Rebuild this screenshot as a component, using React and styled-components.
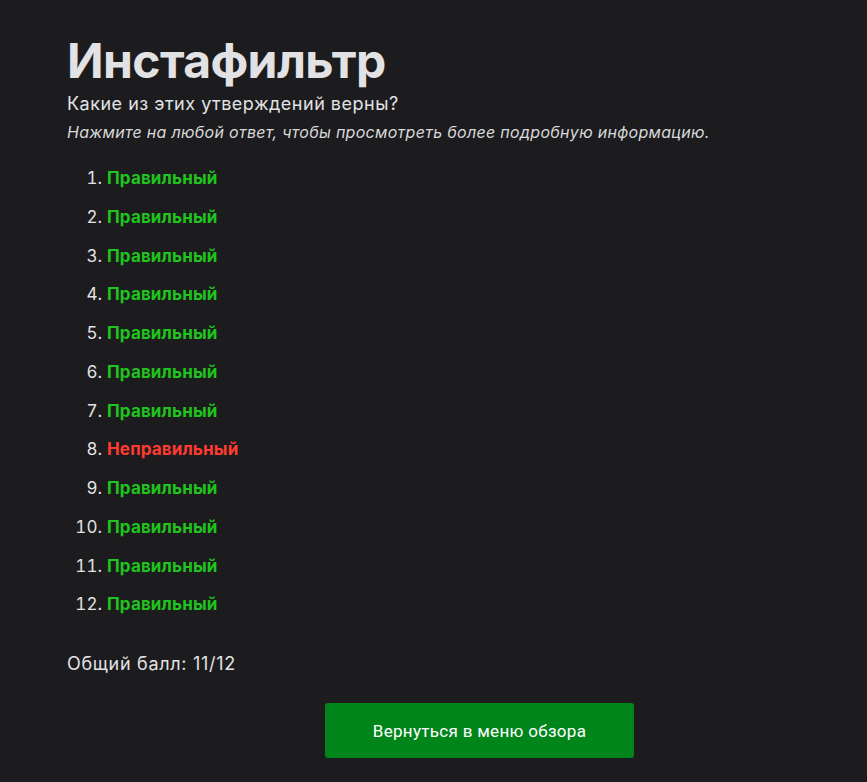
import React from "react";
import styled, { createGlobalStyle } from "styled-components";

const GlobalStyle = createGlobalStyle`
  html, body {
    margin: 0;
    background: #1c1c1e;
  }
  body {
    font-family: Inter, "Noto Sans", sans-serif;
    color: #e2e2e4;
  }
`;

const results = [true, true, true, true, true, true, true, false, true, true, true, true];

export default function App() {
  const score = results.filter(Boolean).length;
  return (
    <>
      <GlobalStyle />
      <Page>
        <Title>Инстафильтр</Title>
        <Question>Какие из этих утверждений верны?</Question>
        <Hint>Нажмите на любой ответ, чтобы просмотреть более подробную информацию.</Hint>
        <AnswerList>
          {results.map((ok, idx) => (
            <Answer key={idx}>
              <Verdict $ok={ok}>{ok ? "Правильный" : "Неправильный"}</Verdict>
            </Answer>
          ))}
        </AnswerList>
        <Score>
          Общий балл: {score}/{results.length}
        </Score>
        <ButtonRow>
          <BackButton>Вернуться в меню обзора</BackButton>
        </ButtonRow>
      </Page>
    </>
  );
}

const Page = styled.div`
  padding: 30px 0 0 67px;
`;

const Title = styled.h1`
  margin: 0;
  font-size: 48px;
  font-weight: 700;
  line-height: 62px;
  letter-spacing: -0.6px;
  color: #e2e2e4;
`;

const Question = styled.p`
  margin: 0;
  font-size: 18px;
  line-height: 24px;
  letter-spacing: 0.5px;
`;

const Hint = styled.p`
  margin: 6px 0 0;
  font-size: 16px;
  line-height: 20px;
  letter-spacing: 0.3px;
  font-style: italic;
  color: #d8d8da;
`;

const AnswerList = styled.ol`
  margin: 26px 0 0;
  padding-left: 40px;
  font-size: 17px;
  letter-spacing: 0.15px;
`;

const Answer = styled.li`
  line-height: 20px;
  margin-bottom: 18.75px;
  padding-left: 0;
`;

const Verdict = styled.span`
  font-weight: 700;
  color: ${(p) => (p.$ok ? "#1fc41c" : "#ff3b30")};
`;

const Score = styled.p`
  margin: 38px 0 0;
  font-size: 18px;
  line-height: 24px;
  letter-spacing: 0.7px;
`;

const ButtonRow = styled.div`
  margin-top: 27px;
  padding-left: 258px;
`;

const BackButton = styled.button`
  width: 309px;
  height: 55px;
  border: none;
  border-radius: 3px;
  background: #00851b;
  color: #ffffff;
  font-family: Roboto, "Noto Sans", sans-serif;
  font-size: 17px;
  letter-spacing: 0.3px;
  cursor: pointer;
`;
